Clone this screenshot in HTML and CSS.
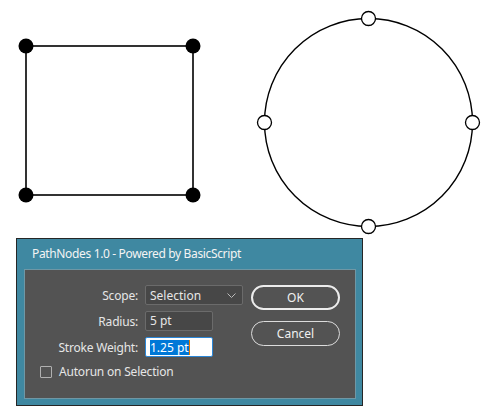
FILE: index.html
```html
<!DOCTYPE html>
<html>
<head>
<meta charset="utf-8">
<link rel="stylesheet" href="styles.css">
</head>
<body>
<div class="canvas">
  <svg width="489" height="238" viewBox="0 0 489 238" xmlns="http://www.w3.org/2000/svg">
    <rect x="26" y="46" width="167" height="149" fill="none" stroke="#000" stroke-width="1.6"/>
    <circle cx="26" cy="46" r="7.5" fill="#000"/>
    <circle cx="193" cy="46" r="7.5" fill="#000"/>
    <circle cx="26" cy="195" r="7.5" fill="#000"/>
    <circle cx="193" cy="195" r="7.5" fill="#000"/>
    <circle cx="368.5" cy="122.5" r="104" fill="none" stroke="#000" stroke-width="1.4"/>
    <circle cx="368.5" cy="18.5" r="7" fill="#fff" stroke="#000" stroke-width="1.3"/>
    <circle cx="368.5" cy="226.5" r="7" fill="#fff" stroke="#000" stroke-width="1.3"/>
    <circle cx="264.5" cy="122.5" r="7" fill="#fff" stroke="#000" stroke-width="1.3"/>
    <circle cx="472.5" cy="122.5" r="7" fill="#fff" stroke="#000" stroke-width="1.3"/>
  </svg>
</div>
<div class="dialog">
  <div class="titlebar">PathNodes 1.0 - Powered by BasicScript</div>
  <div class="panel">
    <div class="form">
      <div class="row">
        <span class="label">Scope:</span>
        <div class="select"><span>Selection</span>
          <svg class="chev" width="9" height="5" viewBox="0 0 9 5"><path d="M0.5 0.5 L4.5 4.5 L8.5 0.5" fill="none" stroke="#bbb" stroke-width="1"/></svg>
        </div>
      </div>
      <div class="row">
        <span class="label">Radius:</span>
        <div class="input">5 pt</div>
      </div>
      <div class="row">
        <span class="label">Stroke Weight:</span>
        <div class="input active"><span class="sel">1.25 pt</span><span class="caret"></span></div>
      </div>
      <div class="check">
        <span class="box"></span>
        <span class="clabel">Autorun on Selection</span>
      </div>
    </div>
    <div class="buttons">
      <div class="btn default">OK</div>
      <div class="btn">Cancel</div>
    </div>
  </div>
</div>
</body>
</html>
```
FILE: styles.css
```css
html, body {
  margin: 0;
  padding: 0;
  background: #fff;
}
body {
  font-family: "Noto Sans", "Open Sans", sans-serif;
  font-size: 12px;
  color: #e6e6e6;
}
.canvas svg {
  display: block;
}
.dialog {
  box-sizing: border-box;
  margin-left: 16px;
  width: 347px;
  height: 168px;
  border: 1px solid #262626;
  background: #3f88a1;
  display: flex;
  flex-direction: column;
  padding: 0 6px 6px 7px;
}
.titlebar {
  height: 30px;
  line-height: 30px;
  padding-left: 8px;
  color: #f4f4f4;
  font-size: 12px;
  letter-spacing: -0.35px;
}
.panel {
  flex: 1;
  background: #535353;
  border: 1px solid #6f97a5;
  display: flex;
  padding-top: 15px;
}
.form {
  width: 225px;
  display: flex;
  flex-direction: column;
  gap: 6px;
}
.row {
  display: flex;
  align-items: center;
  height: 20px;
}
.label {
  width: 113px;
  text-align: right;
  padding-right: 7px;
  letter-spacing: -0.2px;
}
.select {
  border: 1px solid #6b6b6b;
  border-radius: 2px;
  background: #474747;
  display: flex;
  align-items: center;
  justify-content: space-between;
  padding: 0 6px 0 4px;
  box-sizing: border-box;
  width: 98px;
  height: 20px;
}
.chev {
  display: block;
}
.input {
  width: 68px;
  height: 20px;
  box-sizing: border-box;
  border: 1px solid #6b6b6b;
  border-radius: 2px;
  background: #474747;
  padding-left: 4px;
  line-height: 18px;
}
.input.active {
  background: #fff;
  border: 1px solid #2b86d6;
  display: flex;
  align-items: center;
}
.sel {
  background: #0078d7;
  color: #fff;
  line-height: 15px;
}
.caret {
  width: 1px;
  height: 15px;
  background: #e07800;
}
.check {
  display: flex;
  align-items: center;
  margin-top: 0;
  padding-left: 15px;
}
.box {
  width: 10px;
  height: 10px;
  border: 1px solid #b0b0b0;
  border-radius: 1px;
  margin-right: 7px;
}
.clabel {
  letter-spacing: -0.2px;
}
.buttons {
  margin-left: 1px;
  display: flex;
  flex-direction: column;
  gap: 11px;
}
.btn {
  width: 89px;
  height: 25px;
  box-sizing: border-box;
  border: 1px solid #dcdcdc;
  border-radius: 13px;
  text-align: center;
  line-height: 23px;
  color: #f0f0f0;
}
.btn.default {
  border: 2px solid #ececec;
  line-height: 21px;
}
```
